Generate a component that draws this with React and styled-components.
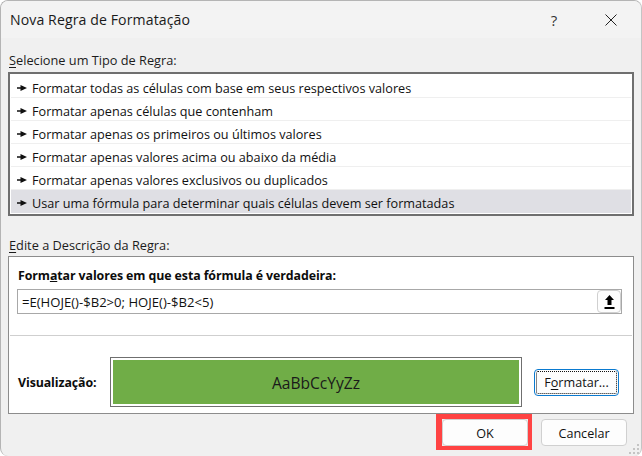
import React from "react"
import styled, { createGlobalStyle } from "styled-components"

const Global = createGlobalStyle`
  html, body {
    margin: 0;
    padding: 0;
    background: #fff;
  }
  body {
    font-family: "Open Sans", "Noto Sans", sans-serif;
    color: #111;
  }
`

const Dialog = styled.div`
  position: relative;
  width: 642px;
  height: 456px;
  box-sizing: border-box;
  overflow: hidden;
  background: #f0f0f0;
  border: 1px solid #b4b4b4;
  border-bottom: 0;
  border-right-color: #c4c4c4;
  border-radius: 8px;
  display: flex;
  flex-direction: column;
`

const TitleBar = styled.div`
  height: 37px;
  flex: none;
  background: #f3f3f3;
  display: flex;
  align-items: center;
  padding: 0 1px 0 9px;
`

const Title = styled.div`
  flex: 1;
  font-size: 14.1px;
  letter-spacing: 0.1px;
  color: #1a1a1a;
`

const TitleButton = styled.div`
  width: 58px;
  display: flex;
  justify-content: center;
  align-items: center;
  font-size: 15px;
  color: #333;
  & + & {
    margin-left: -1px;
  }
`

const Body = styled.div`
  flex: 1;
  display: flex;
  flex-direction: column;
  padding: 14px 7px 0;
`

const Label = styled.div`
  font-size: 12.75px;
  line-height: 16px;
  height: 18px;
  padding-left: 1px;
  color: #1c1c1c;
  u {
    text-underline-offset: 2px;
  }
`

const RuleList = styled.div`
  margin-top: 2px;
  height: 144px;
  box-sizing: border-box;
  border: 2px solid #6f6f6f;
  background: #fff;
  padding: 1px 1px 0;
`

const RuleRow = styled.div`
  height: 23px;
  box-sizing: border-box;
  display: flex;
  align-items: center;
  padding: 3px 0 0 6px;
  gap: 5px;
  font-size: 12.67px;
  border-bottom: 1px solid ${p => (p.$selected ? "#dfdfe4" : "#efefef")};
  background: ${p => (p.$selected ? "#dfdfe4" : "#fff")};
  color: #111;
`

const Bullet = styled.svg`
  width: 10px;
  height: 8px;
  flex: none;
`

const DescLabel = styled(Label)`
  margin-top: 21px;
  height: 19px;
`

const Panel = styled.div`
  height: 158px;
  box-sizing: border-box;
  border: 1px solid #8c8c8c;
  background: #fff;
  display: flex;
  flex-direction: column;
  padding: 0 1px;
`

const Heading = styled.div`
  margin-top: 10px;
  padding-left: 8px;
  font-size: 12.4px;
  line-height: 18px;
  font-weight: 700;
  color: #0c0c0c;
  letter-spacing: -0.1px;
`

const FormulaBox = styled.div`
  margin: 4px 10px 0 7px;
  height: 25px;
  box-sizing: border-box;
  border: 1px solid #a8a8a8;
  display: flex;
  align-items: center;
  justify-content: space-between;
  padding: 0 0 0 4px;
  font-size: 13.1px;
  color: #111;
`

const FormulaText = styled.span`
  padding-top: 1px;
`

const CollapseButton = styled.div`
  width: 24px;
  height: 23px;
  box-sizing: border-box;
  border: 1px solid #d0d0d0;
  border-radius: 4px;
  background: #fdfdfd;
  display: flex;
  align-items: center;
  justify-content: center;
`

const Divider = styled.div`
  margin: 21px 0 0;
  height: 1px;
  background: #cfcfcf;
`

const PreviewRow = styled.div`
  margin-top: 21px;
  display: flex;
  align-items: center;
  padding-left: 8px;
`

const PreviewLabel = styled.div`
  width: 92px;
  flex: none;
  padding-top: 1px;
  font-size: 12.4px;
  font-weight: 700;
  color: #0c0c0c;
  letter-spacing: -0.1px;
`

const PreviewFrame = styled.div`
  width: 412px;
  height: 50px;
  box-sizing: border-box;
  border: 1px solid #6f6f6f;
  padding: 2px;
  flex: none;
`

const PreviewFill = styled.div`
  height: 100%;
  box-sizing: border-box;
  padding-top: 1px;
  background: #70ad47;
  display: flex;
  align-items: center;
  justify-content: center;
  font-size: 15.6px;
  color: #1a1a1a;
`

const Button = styled.div`
  width: 86px;
  height: 27px;
  box-sizing: border-box;
  padding-top: 1px;
  border: 1px solid #d0d0d0;
  border-radius: 4px;
  background: #fdfdfd;
  display: flex;
  align-items: center;
  justify-content: center;
  font-size: 12.6px;
  color: #111;
  u {
    text-underline-offset: 2px;
  }
`

const FormatButton = styled(Button)`
  width: 85px;
  margin-left: 12px;
  border: 1px solid #0a7ad0;
  position: relative;
  &::after {
    content: "";
    position: absolute;
    inset: 1px;
    border: 1px dotted #111;
    border-radius: 2px;
  }
`

const CancelButton = styled(Button)`
  margin-top: 5px;
`

const Footer = styled.div`
  display: flex;
  justify-content: flex-end;
  align-items: flex-start;
  padding-right: 7px;
`

const Highlight = styled.div`
  border: solid #ff4343;
  border-width: 5px 4px 4px 6px;
  margin-right: 9px;
`

const Grip = styled.svg`
  position: absolute;
  right: 0;
  bottom: 0;
  width: 12px;
  height: 12px;
`

const rules = [
  "Formatar todas as células com base em seus respectivos valores",
  "Formatar apenas células que contenham",
  "Formatar apenas os primeiros ou últimos valores",
  "Formatar apenas valores acima ou abaixo da média",
  "Formatar apenas valores exclusivos ou duplicados",
  "Usar uma fórmula para determinar quais células devem ser formatadas",
]

const App = () => (
  <>
    <Global />
    <Dialog>
      <TitleBar>
        <Title>Nova Regra de Formatação</Title>
        <TitleButton>?</TitleButton>
        <TitleButton>
          <svg width="12" height="12" viewBox="0 0 12 12">
            <path d="M0.5 0.5L11.5 11.5M11.5 0.5L0.5 11.5" stroke="#222" strokeWidth="1" />
          </svg>
        </TitleButton>
      </TitleBar>
      <Body>
        <Label>
          <u>S</u>elecione um Tipo de Regra:
        </Label>
        <RuleList>
          {rules.map((rule, i) => (
            <RuleRow key={rule} $selected={i === 5}>
              <Bullet viewBox="0 0 10 8">
                <path d="M0 3.2H3.5V1L10 4L3.5 7V4.8H0Z" fill="#111" />
              </Bullet>
              {rule}
            </RuleRow>
          ))}
        </RuleList>
        <DescLabel>
          <u>E</u>dite a Descrição da Regra:
        </DescLabel>
        <Panel>
          <Heading>
            Form<u>a</u>tar valores em que esta fórmula é verdadeira:
          </Heading>
          <FormulaBox>
            <FormulaText>=E(HOJE()-$B2&gt;0; HOJE()-$B2&lt;5)</FormulaText>
            <CollapseButton>
              <svg width="11" height="14" viewBox="0 0 11 14">
                <path d="M5.5 0L10 5H7.5V10H3.5V5H1Z" fill="#000" />
                <rect x="0.5" y="12" width="10" height="2" fill="#000" />
              </svg>
            </CollapseButton>
          </FormulaBox>
          <Divider />
          <PreviewRow>
            <PreviewLabel>Visualização:</PreviewLabel>
            <PreviewFrame>
              <PreviewFill>AaBbCcYyZz</PreviewFill>
            </PreviewFrame>
            <FormatButton>
              F<u>o</u>rmatar...
            </FormatButton>
          </PreviewRow>
        </Panel>
        <Footer>
          <Highlight>
            <Button>OK</Button>
          </Highlight>
          <CancelButton>Cancelar</CancelButton>
        </Footer>
      </Body>
      <Grip viewBox="0 0 12 12">
        <g fill="#c4c4c4">
          <rect x="8" y="0" width="2" height="2" />
          <rect x="4" y="4" width="2" height="2" />
          <rect x="8" y="4" width="2" height="2" />
          <rect x="0" y="8" width="2" height="2" />
          <rect x="4" y="8" width="2" height="2" />
          <rect x="8" y="8" width="2" height="2" />
        </g>
      </Grip>
    </Dialog>
  </>
)

export default App
